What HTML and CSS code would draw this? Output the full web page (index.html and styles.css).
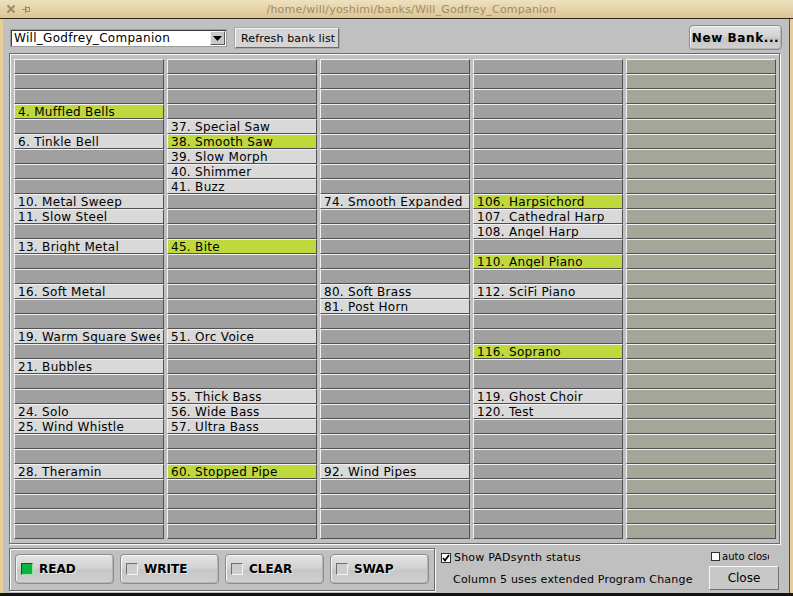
FILE: index.html
```html
<!DOCTYPE html>
<html>
<head>
<meta charset="utf-8">
<link rel="stylesheet" href="styles.css">
</head>
<body>
<div class="window">
  <div class="titlebar">
    <div class="title-icons">
      <svg class="ico-close" width="10" height="10" viewBox="0 0 10 10"><path d="M1.5 1.5 L8.5 8.5 M8.5 1.5 L1.5 8.5" stroke="#9e8a64" stroke-width="2" fill="none"/></svg>
      <svg class="ico-pin" width="8" height="7" viewBox="0 0 8 7"><path d="M0 3.5 H3" stroke="#9e8a64" stroke-width="1" fill="none"/><rect x="3" y="0" width="1" height="7" fill="#9e8a64"/><rect x="4" y="1.5" width="3.5" height="4" fill="none" stroke="#9e8a64" stroke-width="1"/></svg>
    </div>
    <div class="title">/home/will/yoshimi/banks/Will_Godfrey_Companion</div>
  </div>
  <div class="frame-row">
    <div class="client">
      <div class="toprow">
        <div class="dropdown">
          <span class="dd-text">Will_Godfrey_Companion</span>
          <span class="dd-arrow"><svg width="9" height="5" viewBox="0 0 9 5"><path d="M0 0 H9 L4.5 5 Z" fill="#000"/></svg></span>
        </div>
        <div class="btn-flat refresh">Refresh bank list</div>
        <div class="btn-plastic newbank">New Bank...</div>
      </div>
      <div class="bank-frame">
        <div class="grid">
          <div class="e"></div><div class="e"></div><div class="e"></div><div class="h"><span>4. Muffled Bells</span></div>
          <div class="e"></div><div class="n"><span>6. Tinkle Bell</span></div><div class="e"></div><div class="e"></div>
          <div class="e"></div><div class="n"><span>10. Metal Sweep</span></div><div class="n"><span>11. Slow Steel</span></div><div class="e"></div>
          <div class="n"><span>13. Bright Metal</span></div><div class="e"></div><div class="e"></div><div class="n"><span>16. Soft Metal</span></div>
          <div class="e"></div><div class="e"></div><div class="n"><span>19. Warm Square Sweep</span></div><div class="e"></div>
          <div class="n"><span>21. Bubbles</span></div><div class="e"></div><div class="e"></div><div class="n"><span>24. Solo</span></div>
          <div class="n"><span>25. Wind Whistle</span></div><div class="e"></div><div class="e"></div><div class="n"><span>28. Theramin</span></div>
          <div class="e"></div><div class="e"></div><div class="e"></div><div class="e"></div>

          <div class="e"></div><div class="e"></div><div class="e"></div><div class="e"></div>
          <div class="n"><span>37. Special Saw</span></div><div class="h"><span>38. Smooth Saw</span></div><div class="n"><span>39. Slow Morph</span></div><div class="n"><span>40. Shimmer</span></div>
          <div class="n"><span>41. Buzz</span></div><div class="e"></div><div class="e"></div><div class="e"></div>
          <div class="h"><span>45. Bite</span></div><div class="e"></div><div class="e"></div><div class="e"></div>
          <div class="e"></div><div class="e"></div><div class="n"><span>51. Orc Voice</span></div><div class="e"></div>
          <div class="e"></div><div class="e"></div><div class="n"><span>55. Thick Bass</span></div><div class="n"><span>56. Wide Bass</span></div>
          <div class="n"><span>57. Ultra Bass</span></div><div class="e"></div><div class="e"></div><div class="h"><span>60. Stopped Pipe</span></div>
          <div class="e"></div><div class="e"></div><div class="e"></div><div class="e"></div>

          <div class="e"></div><div class="e"></div><div class="e"></div><div class="e"></div>
          <div class="e"></div><div class="e"></div><div class="e"></div><div class="e"></div>
          <div class="e"></div><div class="n"><span>74. Smooth Expanded</span></div><div class="e"></div><div class="e"></div>
          <div class="e"></div><div class="e"></div><div class="e"></div><div class="n"><span>80. Soft Brass</span></div>
          <div class="n"><span>81. Post Horn</span></div><div class="e"></div><div class="e"></div><div class="e"></div>
          <div class="e"></div><div class="e"></div><div class="e"></div><div class="e"></div>
          <div class="e"></div><div class="e"></div><div class="e"></div><div class="n"><span>92. Wind Pipes</span></div>
          <div class="e"></div><div class="e"></div><div class="e"></div><div class="e"></div>

          <div class="e"></div><div class="e"></div><div class="e"></div><div class="e"></div>
          <div class="e"></div><div class="e"></div><div class="e"></div><div class="e"></div>
          <div class="e"></div><div class="h"><span>106. Harpsichord</span></div><div class="n"><span>107. Cathedral Harp</span></div><div class="n"><span>108. Angel Harp</span></div>
          <div class="e"></div><div class="h"><span>110. Angel Piano</span></div><div class="e"></div><div class="n"><span>112. SciFi Piano</span></div>
          <div class="e"></div><div class="e"></div><div class="e"></div><div class="h"><span>116. Soprano</span></div>
          <div class="e"></div><div class="e"></div><div class="n"><span>119. Ghost Choir</span></div><div class="n"><span>120. Test</span></div>
          <div class="e"></div><div class="e"></div><div class="e"></div><div class="e"></div>
          <div class="e"></div><div class="e"></div><div class="e"></div><div class="e"></div>

          <div class="x"></div><div class="x"></div><div class="x"></div><div class="x"></div>
          <div class="x"></div><div class="x"></div><div class="x"></div><div class="x"></div>
          <div class="x"></div><div class="x"></div><div class="x"></div><div class="x"></div>
          <div class="x"></div><div class="x"></div><div class="x"></div><div class="x"></div>
          <div class="x"></div><div class="x"></div><div class="x"></div><div class="x"></div>
          <div class="x"></div><div class="x"></div><div class="x"></div><div class="x"></div>
          <div class="x"></div><div class="x"></div><div class="x"></div><div class="x"></div>
          <div class="x"></div><div class="x"></div><div class="x"></div><div class="x"></div>
        </div>
      </div>
      <div class="bottom">
        <div class="mode-panel">
          <div class="btn-plastic mode"><span class="led on"></span><span>READ</span></div>
          <div class="btn-plastic mode"><span class="led"></span><span>WRITE</span></div>
          <div class="btn-plastic mode"><span class="led"></span><span>CLEAR</span></div>
          <div class="btn-plastic mode"><span class="led"></span><span>SWAP</span></div>
        </div>
        <div class="opts">
          <div class="check-row">
            <span class="checkbox checked"><svg width="8" height="8" viewBox="0 0 8 8"><path d="M1 4 L3 6.5 L7 1" stroke="#000" stroke-width="1.8" fill="none"/></svg></span>
            <span>Show PADsynth status</span>
          </div>
          <div class="note">Column 5 uses extended Program Change</div>
        </div>
        <div class="closebox">
          <div class="autoclose"><span class="checkbox small"></span><span>auto close</span></div>
          <div class="btn-flat close">Close</div>
        </div>
      </div>
    </div>
  </div>
</div>
</body>
</html>
```
FILE: styles.css
```css
* { box-sizing: border-box; }
html, body { margin: 0; padding: 0; }
body {
  width: 793px;
  height: 596px;
  overflow: hidden;
  background: #e9cd98;
  font-family: "DejaVu Sans", sans-serif;
  color: #000;
}
.window {
  display: flex;
  flex-direction: column;
  height: 596px;
  border-bottom: 3px solid #141414;
}
.titlebar {
  flex: none;
  height: 19px;
  display: flex;
  align-items: center;
  background: linear-gradient(#efe1bf, #dcc593);
  border-bottom: 1px solid #2e271a;
}
.title-icons {
  width: 30px;
  display: flex;
  align-items: center;
  padding-left: 6px;
  gap: 6px;
}
.title {
  flex: 1;
  text-align: center;
  font-size: 11px;
  color: #a08c68;
  letter-spacing: 0.2px;
}
.frame-row {
  flex: 1;
  display: flex;
  padding: 0 3px;
}
.client {
  flex: 1;
  display: flex;
  flex-direction: column;
  background: #c0c0c0;
  border-right: 1px solid #4a4a4a;
}
.toprow {
  flex: none;
  height: 34px;
  display: flex;
  align-items: flex-start;
  padding: 6px 7px 0 7px;
}
.dropdown {
  width: 217px;
  height: 18px;
  margin-top: 4px;
  display: flex;
  align-items: stretch;
  background: #fff;
  border: 1px solid #9c9c9c;
  box-shadow: inset 1px 1px 0 #3c3c3c;
  font-size: 12px;
  letter-spacing: 0.3px;
}
.dd-text {
  flex: 1;
  padding-left: 3px;
  line-height: 17px;
  white-space: nowrap;
}
.dd-arrow {
  width: 15px;
  margin: 1px 1px 1px 0;
  display: flex;
  align-items: center;
  justify-content: center;
  background: #c8c8c8;
  border: 1px solid;
  border-color: #f4f4f4 #5a5a5a #5a5a5a #f4f4f4;
}
.btn-flat {
  display: flex;
  align-items: center;
  background: #d4d4d4;
  border: 1px solid;
  border-color: #f6f6f6 #6c6c6c #6c6c6c #f6f6f6;
  box-shadow: 0 0 0 1px #a8a8a8;
  font-size: 12px;
  white-space: nowrap;
}
.refresh {
  width: 104px;
  height: 20px;
  margin-top: 3px;
  margin-left: 8px;
  padding-left: 5px;
  font-size: 11px;
  letter-spacing: 0.15px;
}
.btn-plastic {
  border: 1px solid #8c8c8c;
  border-radius: 4px;
  background: linear-gradient(#e4e4e4, #d2d2d2 45%, #c6c6c6 55%, #d0d0d0);
  box-shadow: inset 1px 1px 0 #f4f4f4, inset -1px -1px 0 #b4b4b4;
  font-weight: bold;
  font-size: 12px;
}
.newbank {
  margin-left: auto;
  width: 93px;
  height: 25px;
  margin-top: 0;
  display: flex;
  align-items: center;
  justify-content: center;
  letter-spacing: 0.6px;
}
.bank-frame {
  flex: none;
  margin-left: 6px;
  width: 771px;
  height: 491px;
  border: 1px solid #6a6a6a;
  box-shadow: inset 1px 1px 0 #fafafa, 1px 1px 0 #fafafa;
  padding: 5px 3px 4px 4px;
}
.grid {
  display: grid;
  grid-template-columns: repeat(5, 150px);
  grid-template-rows: repeat(32, 15px);
  grid-auto-flow: column;
  column-gap: 3px;
}
.grid > div {
  border-top: 1px solid #f2f2f2;
  border-left: 1px solid #f2f2f2;
  border-bottom: 1px solid #505050;
  border-right: 1px solid #505050;
  padding: 0 3px;
  font-size: 12px;
  line-height: 15px;
  letter-spacing: 0.3px;
  white-space: nowrap;
  overflow: hidden;
}
.grid > div > span {
  display: block;
  overflow: hidden;
  height: 13px;
  line-height: 15px;
}
.grid > .e { background: #a0a0a0; }
.grid > .n { background: #d9d9d9; }
.grid > .h { background: #bfd93d; }
.grid > .x { background: #a5a697; }
.bottom {
  flex: none;
  display: flex;
  margin-top: 4px;
  height: 45px;
}
.mode-panel {
  margin-left: 6px;
  width: 426px;
  height: 43px;
  border: 1px solid #6a6a6a;
  box-shadow: inset 1px 1px 0 #fafafa, 1px 1px 0 #fafafa;
  padding: 5px;
  display: flex;
  gap: 6px;
}
.mode {
  width: 99px;
  height: 30px;
  display: flex;
  align-items: center;
  padding-left: 5px;
  gap: 6px;
  font-size: 12px;
  text-shadow: 1px 1px 0 #e8e8e8;
}
.led {
  width: 12px;
  height: 12px;
  flex: none;
  background: #cdcdcd;
  border: 1px solid;
  border-color: #6e6e6e #f4f4f4 #f4f4f4 #6e6e6e;
}
.led.on {
  background: #0bb23e;
  border-color: #3a3a3a #9adfa8 #9adfa8 #3a3a3a;
}
.opts {
  margin-left: 6px;
  padding-top: 4px;
  display: flex;
  flex-direction: column;
  font-size: 11px;
  letter-spacing: 0.2px;
}
.check-row {
  display: flex;
  align-items: center;
  gap: 3px;
  height: 11px;
}
.checkbox {
  width: 10px;
  height: 10px;
  flex: none;
  display: flex;
  align-items: center;
  justify-content: center;
  background: #fff;
  border: 1px solid #303030;
}
.checkbox.small {
  width: 9px;
  height: 9px;
}
.note {
  margin-top: 10px;
  padding-left: 12px;
  line-height: 14px;
}
.closebox {
  margin-left: auto;
  margin-right: 10px;
  width: 70px;
  display: flex;
  flex-direction: column;
}
.autoclose {
  margin-top: 3px;
  margin-left: 2px;
  width: 58px;
  height: 11px;
  display: flex;
  align-items: center;
  gap: 2px;
  font-size: 10px;
  white-space: nowrap;
  overflow: hidden;
}
.close {
  margin-top: 4px;
  height: 24px;
  justify-content: center;
  background: #c8c8c8;
  box-shadow: none;
  border-color: #f6f6f6 #707070 #707070 #f6f6f6;
}
```
